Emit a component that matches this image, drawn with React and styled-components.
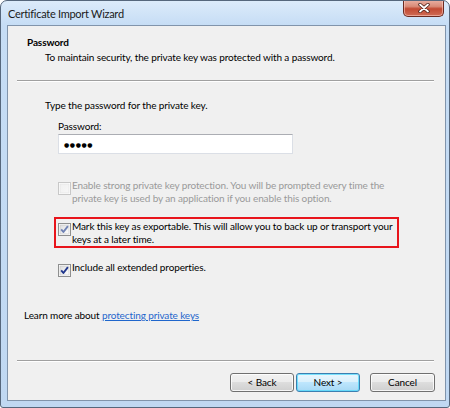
import React from "react";
import styled, { createGlobalStyle } from "styled-components";

const Global = createGlobalStyle`
  html, body { margin: 0; padding: 0; background: #ffffff; }
  body { font-family: Lato, "Liberation Sans", sans-serif; }
`;

const Window = styled.div`
  box-sizing: border-box;
  width: 450px;
  height: 408px;
  border: 1px solid #56677c;
  border-radius: 7px 7px 3px 3px;
  background: linear-gradient(180deg, #dcebfa 0px, #c6ddf5 24px, #c0d8f2 100%);
  display: flex;
  flex-direction: column;
  padding: 0 3px 6px 6px;
  overflow: hidden;
`;

const TitleBar = styled.div`
  height: 24px;
  display: flex;
  justify-content: space-between;
  align-items: flex-start;
  flex-shrink: 0;
`;

const TitleText = styled.div`
  font-size: 11px;
  letter-spacing: -0.28px;
  line-height: 25px;
  color: #1a1a1a;
  padding-left: 1px;
`;

const CloseButton = styled.div`
  width: 41px;
  height: 17px;
  margin-top: -1px;
  margin-right: 2px;
  box-sizing: border-box;
  border: 1px solid #6b2a20;
  border-top: none;
  border-radius: 0 0 5px 5px;
  background: linear-gradient(180deg, #eab1a4 0%, #d98b78 40%, #c24a33 55%, #cf6c55 100%);
  box-shadow: inset 0 0 0 1px rgba(255, 210, 200, 0.55);
  display: flex;
  align-items: center;
  justify-content: center;
`;

const Panel = styled.div`
  flex: 1;
  display: flex;
  flex-direction: column;
  border: 1px solid #8194ab;
  background: #f0f0f0;
  color: #000;
  font-size: 10px;
  line-height: 13px;
  letter-spacing: -0.12px;
`;

const Header = styled.div`
  padding: 10px 0 0 19px;
`;

const HeaderTitle = styled.div`
  font-weight: bold;
`;

const HeaderSub = styled.div`
  margin-top: 2px;
  padding-left: 18px;
`;

const Separator = styled.div`
  margin: ${(p) => p.$top}px 11px 0 9px;
  border-top: 1px solid #a0a0a0;
  border-bottom: 1px solid #ffffff;
`;

const Body = styled.div`
  flex: 1;
  padding: 17px 0 0 16px;
  display: flex;
  flex-direction: column;
  align-items: flex-start;
`;

const Instruction = styled.div`
  margin-left: 21px;
`;

const FieldLabel = styled.div`
  margin: 8px 0 0 34px;
`;

const PasswordBox = styled.div`
  box-sizing: border-box;
  margin: 1px 0 0 34px;
  width: 235px;
  height: 20px;
  background: #fff;
  border: 1px solid #dbdfe6;
  border-top-color: #abadb3;
  display: flex;
  align-items: center;
  padding-left: 5px;
  font-family: "DejaVu Sans", sans-serif;
  font-size: 6px;
  letter-spacing: 0.6px;
  color: #000;
`;

const CheckRow = styled.div`
  display: flex;
  align-items: flex-start;
  gap: 1px;
  white-space: nowrap;
  margin-top: ${(p) => p.$top}px;
  margin-left: ${(p) => (p.$highlight ? 30 : 34)}px;
  color: ${(p) => (p.$disabled ? "#9a9a9a" : "#000")};
  ${(p) =>
    p.$highlight &&
    `
    box-sizing: border-box;
    width: 345px;
    border: 2px solid #e8141b;
    padding: 1px 0 0 2px;
  `}
`;

const BoxIcon = styled.svg`
  flex-shrink: 0;
  margin-top: 3px;
`;

const Learn = styled.div`
  margin-top: 32px;
`;

const Link = styled.a`
  color: #1f66cc;
  text-decoration: underline;
`;

const ButtonRow = styled.div`
  display: flex;
  justify-content: flex-end;
  margin: 11px 10px 0 0;
  padding-bottom: 8px;
`;

const Button = styled.div`
  box-sizing: border-box;
  width: ${(p) => p.$w || 64}px;
  height: 19px;
  margin-left: ${(p) => p.$gap || 0}px;
  border: 1px solid ${(p) => (p.$default ? "#3c7fb1" : "#707070")};
  border-radius: 3px;
  background: ${(p) =>
    p.$default
      ? "linear-gradient(180deg, #eaf6fd 0%, #d9f0fc 50%, #bee6fd 50%, #a7d9f5 100%)"
      : "linear-gradient(180deg, #f2f2f2 0%, #ebebeb 50%, #dddddd 50%, #cfcfcf 100%)"};
  box-shadow: inset 0 0 0 1px ${(p) => (p.$default ? "rgba(72, 216, 251, 0.7)" : "rgba(255,255,255,0.8)")};
  display: flex;
  align-items: center;
  justify-content: center;
  font-size: 10px;
  color: #000;
`;

function CheckBox({ checked, disabled, faded }) {
  const border = disabled ? "#c8c8c8" : "#8e8f8f";
  const mark = faded ? "#6f82b4" : "#21378c";
  const id = `g${faded ? "f" : disabled ? "d" : "n"}`;
  return (
    <BoxIcon width="13" height="13" viewBox="0 0 13 13">
      <defs>
        <linearGradient id={id} x1="0" y1="0" x2="1" y2="1">
          <stop offset="0" stopColor={disabled ? "#f0f0f0" : "#dcdcdc"} />
          <stop offset="1" stopColor={disabled ? "#f7f7f7" : "#ffffff"} />
        </linearGradient>
      </defs>
      <rect x="0.5" y="0.5" width="12" height="12" fill="#fff" stroke={border} />
      <rect
        x="2"
        y="2"
        width="9"
        height="9"
        fill={`url(#${id})`}
        stroke={disabled ? "#e2e2e2" : "#c4c4c4"}
        strokeWidth="0.6"
      />
      {checked && (
        <path d="M3.2 6.4 L5.4 9 L9.9 3.2" fill="none" stroke={mark} strokeWidth="1.9" strokeLinejoin="round" />
      )}
    </BoxIcon>
  );
}

export default function App() {
  return (
    <>
      <Global />
      <Window>
        <TitleBar>
          <TitleText>Certificate Import Wizard</TitleText>
          <CloseButton>
            <svg width="12" height="10" viewBox="0 0 12 10">
              <path d="M2 1.5 L10 8.5 M10 1.5 L2 8.5" stroke="#4a1f18" strokeWidth="3.4" strokeLinecap="round" />
              <path d="M2 1.5 L10 8.5 M10 1.5 L2 8.5" stroke="#ffffff" strokeWidth="1.8" strokeLinecap="round" />
            </svg>
          </CloseButton>
        </TitleBar>
        <Panel>
          <Header>
            <HeaderTitle>Password</HeaderTitle>
            <HeaderSub>To maintain security, the private key was protected with a password.</HeaderSub>
          </Header>
          <Separator $top={16} />
          <Body>
            <Instruction>Type the password for the private key.</Instruction>
            <FieldLabel>Password:</FieldLabel>
            <PasswordBox>●●●●●</PasswordBox>
            <CheckRow $top={25} $disabled>
              <CheckBox disabled />
              <span>
                Enable strong private key protection. You will be prompted every time the
                <br />
                private key is used by an application if you enable this option.
              </span>
            </CheckRow>
            <CheckRow $top={12} $highlight>
              <CheckBox checked faded />
              <span>
                Mark this key as exportable. This will allow you to back up or transport your
                <br />
                keys at a later time.
              </span>
            </CheckRow>
            <CheckRow $top={13}>
              <CheckBox checked />
              <span>Include all extended properties.</span>
            </CheckRow>
            <Learn>
              Learn more about <Link href="#">protecting private keys</Link>
            </Learn>
          </Body>
          <Separator $top={0} />
          <ButtonRow>
            <Button>&lt; Back</Button>
            <Button $default $gap={2}>
              Next &gt;
            </Button>
            <Button $gap={10} $w={65}>
              Cancel
            </Button>
          </ButtonRow>
        </Panel>
      </Window>
    </>
  );
}
